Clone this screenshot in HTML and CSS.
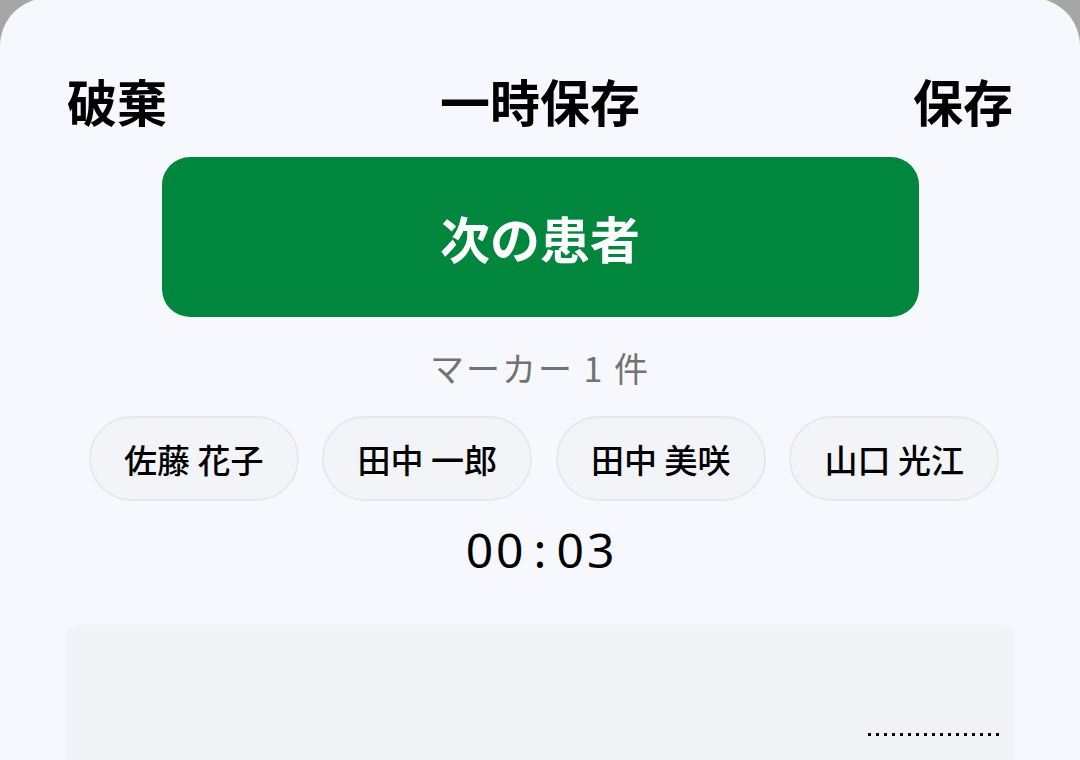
FILE: index.html
```html
<!DOCTYPE html>
<html lang="ja">
<head>
<meta charset="utf-8">
<title>録音</title>
<link rel="stylesheet" href="styles.css">
</head>
<body>
<div class="sheet">
  <div class="header">
    <span class="hbtn">破棄</span>
    <span class="hbtn">一時保存</span>
    <span class="hbtn">保存</span>
  </div>
  <button class="next">次の患者</button>
  <div class="markers">マーカー 1 件</div>
  <div class="chips">
    <span class="chip">佐藤 花子</span>
    <span class="chip">田中 一郎</span>
    <span class="chip">田中 美咲</span>
    <span class="chip">山口 光江</span>
  </div>
  <div class="timer">00<span class="colon">:</span>03</div>
  <div class="panel">
    <div class="dots"></div>
  </div>
</div>
</body>
</html>
```
FILE: styles.css
```css
html, body {
  margin: 0;
  padding: 0;
  height: 100%;
  overflow: hidden;
}
body {
  background: #a6a6a6;
  font-family: "Noto Sans CJK JP", "Noto Sans", sans-serif;
}
.sheet {
  background: #f7f8fd;
  border-radius: 48px 48px 0 0;
  height: 800px;
  margin-top: -2px;
  display: flex;
  flex-direction: column;
  align-items: center;
}
.header {
  align-self: stretch;
  display: flex;
  justify-content: space-between;
  padding: 0 67px 0 67px;
  margin-top: 69px;
  height: 66px;
  align-items: center;
}
.hbtn {
  font-size: 50px;
  font-weight: 700;
  color: #000;
  line-height: 66px;
}
.next {
  margin-top: 24px;
  width: 757px;
  height: 160px;
  border: none;
  border-radius: 28px;
  background: #00873d;
  color: #fff;
  font-family: inherit;
  font-size: 50px;
  font-weight: 700;
}
.markers {
  margin-top: 28px;
  font-size: 34px;
  line-height: 46px;
  letter-spacing: 2px;
  color: #727272;
}
.chips {
  margin-top: 25px;
  display: flex;
  gap: 23.5px;
  padding-left: 8px;
}
.chip {
  box-sizing: border-box;
  width: 210px;
  height: 85px;
  border: 2px solid #e8e8ea;
  border-radius: 43px;
  background: #f3f4f7;
  display: flex;
  align-items: center;
  justify-content: center;
  font-size: 33px;
  font-weight: 500;
  color: #000;
}
.timer {
  margin-top: 20px;
  font-family: "Noto Sans", sans-serif;
  font-size: 48px;
  line-height: 58px;
  letter-spacing: 3px;
  padding-left: 3px;
  color: #000;
}
.colon {
  margin: 0 7px;
}
.panel {
  margin-top: 46px;
  width: 947px;
  flex: 1;
  background: #f2f3f7;
  border-radius: 10px;
  box-sizing: border-box;
  padding: 108px 10px 0 0;
  display: flex;
  justify-content: flex-end;
  align-items: flex-start;
}
.dots {
  width: 136px;
  height: 3px;
  background: repeating-linear-gradient(90deg, #000 0, #000 3px, transparent 3px, transparent 8px);
}
```
